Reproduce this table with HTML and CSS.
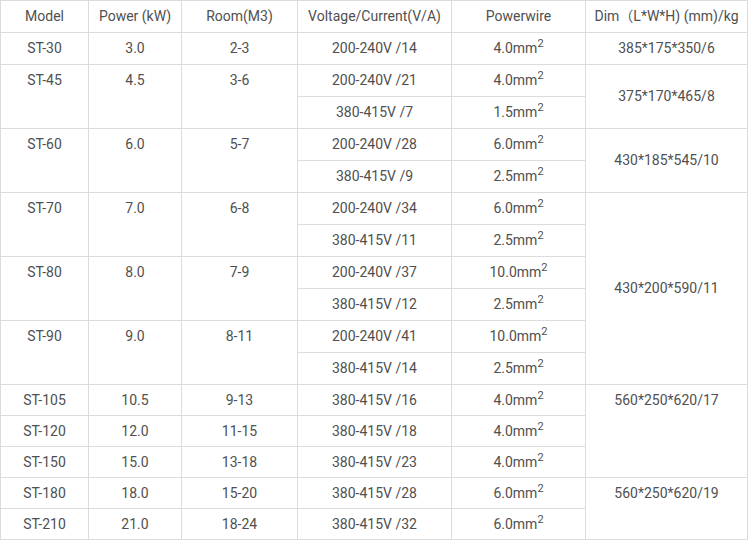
FILE: index.html
```html
<!DOCTYPE html>
<html>
<head>
<meta charset="utf-8">
<link rel="stylesheet" href="styles.css">
</head>
<body>
<table class="spec">
  <colgroup>
    <col class="c-model"><col class="c-power"><col class="c-room"><col class="c-volt"><col class="c-wire"><col class="c-dim">
  </colgroup>
  <thead>
    <tr><th>Model</th><th>Power (kW)</th><th>Room(M3)</th><th>Voltage/Current(V/A)</th><th>Powerwire</th><th>Dim（L*W*H) (mm)/kg</th></tr>
  </thead>
  <tbody>
    <tr><td>ST-30</td><td>3.0</td><td>2-3</td><td>200-240V /14</td><td>4.0mm<sup>2</sup></td><td class="mid">385*175*350/6</td></tr>
    <tr><td rowspan="2">ST-45</td><td rowspan="2">4.5</td><td rowspan="2">3-6</td><td>200-240V /21</td><td>4.0mm<sup>2</sup></td><td rowspan="2" class="mid">375*170*465/8</td></tr>
    <tr><td>380-415V /7</td><td>1.5mm<sup>2</sup></td></tr>
    <tr><td rowspan="2">ST-60</td><td rowspan="2">6.0</td><td rowspan="2">5-7</td><td>200-240V /28</td><td>6.0mm<sup>2</sup></td><td rowspan="2" class="mid">430*185*545/10</td></tr>
    <tr><td>380-415V /9</td><td>2.5mm<sup>2</sup></td></tr>
    <tr><td rowspan="2">ST-70</td><td rowspan="2">7.0</td><td rowspan="2">6-8</td><td>200-240V /34</td><td>6.0mm<sup>2</sup></td><td rowspan="6" class="mid">430*200*590/11</td></tr>
    <tr><td>380-415V /11</td><td>2.5mm<sup>2</sup></td></tr>
    <tr><td rowspan="2">ST-80</td><td rowspan="2">8.0</td><td rowspan="2">7-9</td><td>200-240V /37</td><td>10.0mm<sup>2</sup></td></tr>
    <tr><td>380-415V /12</td><td>2.5mm<sup>2</sup></td></tr>
    <tr><td rowspan="2">ST-90</td><td rowspan="2">9.0</td><td rowspan="2">8-11</td><td>200-240V /41</td><td>10.0mm<sup>2</sup></td></tr>
    <tr><td>380-415V /14</td><td>2.5mm<sup>2</sup></td></tr>
    <tr class="tight"><td>ST-105</td><td>10.5</td><td>9-13</td><td>380-415V /16</td><td>4.0mm<sup>2</sup></td><td rowspan="3">560*250*620/17</td></tr>
    <tr class="tight"><td>ST-120</td><td>12.0</td><td>11-15</td><td>380-415V /18</td><td>4.0mm<sup>2</sup></td></tr>
    <tr class="tight"><td>ST-150</td><td>15.0</td><td>13-18</td><td>380-415V /23</td><td>4.0mm<sup>2</sup></td></tr>
    <tr class="tight"><td>ST-180</td><td>18.0</td><td>15-20</td><td>380-415V /28</td><td>6.0mm<sup>2</sup></td><td rowspan="2">560*250*620/19</td></tr>
    <tr class="tight"><td>ST-210</td><td>21.0</td><td>18-24</td><td>380-415V /32</td><td>6.0mm<sup>2</sup></td></tr>
  </tbody>
</table>
</body>
</html>
```
FILE: styles.css
```css
html, body {
  margin: 0;
  padding: 0;
  background: #fff;
}
body {
  font-family: Roboto, "Noto Sans CJK SC", sans-serif;
  font-size: 14px;
  color: #505050;
}
.spec {
  border-collapse: collapse;
  table-layout: fixed;
  width: 747px;
}
.c-model { width: 88px; }
.c-power { width: 93px; }
.c-room { width: 116px; }
.c-volt { width: 154px; }
.c-wire { width: 134px; }
.c-dim { width: 162px; }
.spec th,
.spec td {
  border: 1px solid #dcdcdc;
  height: 30.75px;
  padding: 0;
  line-height: 31px;
  text-align: center;
  vertical-align: top;
  font-weight: normal;
  white-space: nowrap;
}
.spec .tight td {
  height: 30.1px;
  line-height: 30px;
}
.spec td.mid {
  vertical-align: middle;
}
.spec sup {
  font-size: 11px;
  line-height: 0;
  vertical-align: 6px;
}
```
